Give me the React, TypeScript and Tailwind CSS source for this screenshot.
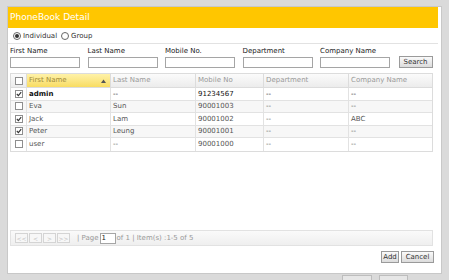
import React from "react";

type Row = {
  checked: boolean;
  first: string;
  last: string;
  mobile: string;
  dept: string;
  company: string;
  active?: boolean;
};

const rows: Row[] = [
  { checked: true, first: "admin", last: "--", mobile: "91234567", dept: "--", company: "--", active: true },
  { checked: false, first: "Eva", last: "Sun", mobile: "90001003", dept: "--", company: "--" },
  { checked: true, first: "Jack", last: "Lam", mobile: "90001002", dept: "--", company: "ABC" },
  { checked: true, first: "Peter", last: "Leung", mobile: "90001001", dept: "--", company: "--" },
  { checked: false, first: "user", last: "--", mobile: "90001000", dept: "--", company: "--" },
];

const fields = ["First Name", "Last Name", "Mobile No.", "Department", "Company Name"];

function Check({ on }: { on: boolean }) {
  return (
    <div className="w-[8px] h-[8px] border border-[#8e8e8e] bg-white flex items-center justify-center">
      {on && (
        <svg width="6" height="6" viewBox="0 0 6 6">
          <path d="M0.8 3 L2.4 4.6 L5.2 1.2" stroke="#333" strokeWidth="1.1" fill="none" />
        </svg>
      )}
    </div>
  );
}

function Radio({ on }: { on: boolean }) {
  return (
    <div className="w-[8px] h-[8px] rounded-full border border-[#666] bg-white flex items-center justify-center">
      {on && <div className="w-[4px] h-[4px] rounded-full bg-[#333]" />}
    </div>
  );
}

function Btn({ children, w }: { children: React.ReactNode; w: string }) {
  return (
    <div
      className={`${w} h-[12px] border border-[#9a9a9a] bg-gradient-to-b from-[#fafafa] to-[#dcdcdc] flex items-center justify-center text-[#333] text-[7px]`}
    >
      {children}
    </div>
  );
}

export default function App() {
  const cols = "grid grid-cols-[15px_84px_85px_68px_85px_85px]";
  return (
    <div
      className="relative w-[449px] h-[280px] bg-[#dadada] overflow-hidden"
      style={{ fontFamily: '"DejaVu Sans", Verdana, sans-serif' }}
    >
      <div className="absolute left-[7px] top-[6px] w-[435px] h-[268px] bg-white border border-[#c8c8c8] flex flex-col">
        {/* title */}
        <div className="w-[430px] h-[21px] bg-[#ffc600] flex items-center pl-[2px]">
          <span className="text-white text-[9px]">PhoneBook Detail</span>
        </div>

        {/* radio row */}
        <div className="w-[430px] h-[16px] border-b border-[#e2e2e2] flex items-center gap-[4px] pl-[5px] pt-[1px] text-[7px] text-[#333]">
          <div className="flex items-center gap-[2px]">
            <Radio on />
            <span>Individual</span>
          </div>
          <div className="flex items-center gap-[2px]">
            <Radio on={false} />
            <span>Group</span>
          </div>
        </div>

        {/* filter form */}
        <div className="flex items-end pl-[2px] pt-[2px] text-[7px] text-[#222]">
          {fields.map((f) => (
            <div key={f} className="flex flex-col mr-[7.5px]">
              <span className="leading-[10px]">{f}</span>
              <div className="w-[70px] h-[11px] mt-[1px] border border-[#a5a5a5] bg-white" />
            </div>
          ))}
          <div className="ml-[1px]">
            <Btn w="w-[34px]">Search</Btn>
          </div>
        </div>

        {/* grid */}
        <div className="ml-[2px] mt-[5px] w-[423px] border border-[#dcdcdc] text-[7px]">
          <div className={`${cols} h-[14px] bg-gradient-to-b from-[#fbfbfb] to-[#ececec] border-b border-[#dcdcdc] text-[#999]`}>
            <div className="flex items-center justify-center">
              <Check on={false} />
            </div>
            <div className="flex items-center justify-between px-[2px] bg-gradient-to-b from-[#fff2a8] to-[#f8dc60] border-l border-[#dcdcdc] text-[#a28b3a]">
              <span>First Name</span>
              <svg width="5" height="4" viewBox="0 0 5 4" className="mr-[2px]">
                <path d="M0 4 L2.5 0.5 L5 4 Z" fill="#555" />
              </svg>
            </div>
            <div className="flex items-center px-[2px] border-l border-[#dcdcdc]">Last Name</div>
            <div className="flex items-center px-[2px] border-l border-[#dcdcdc]">Mobile No</div>
            <div className="flex items-center px-[2px] border-l border-[#dcdcdc]">Department</div>
            <div className="flex items-center px-[2px] border-l border-[#dcdcdc]">Company Name</div>
          </div>
          {rows.map((r, i) => (
            <div
              key={r.first}
              className={`${cols} h-[12.5px] border-b border-[#e2e2e2] last:border-b-0 ${
                i % 2 === 1 ? "bg-[#f7f7f7]" : "bg-white"
              } ${r.active ? "text-[#111]" : "text-[#555]"}`}
            >
              <div className="flex items-center justify-center">
                <Check on={r.checked} />
              </div>
              <div className={`flex items-center px-[2px] border-l border-[#e2e2e2] ${r.active ? "font-semibold" : ""}`}>
                {r.first}
              </div>
              <div className="flex items-center px-[2px] border-l border-[#e2e2e2]">{r.last}</div>
              <div className="flex items-center px-[2px] border-l border-[#e2e2e2]">{r.mobile}</div>
              <div className="flex items-center px-[2px] border-l border-[#e2e2e2]">{r.dept}</div>
              <div className="flex items-center px-[2px] border-l border-[#e2e2e2]">{r.company}</div>
            </div>
          ))}
        </div>

        <div className="flex-1" />

        {/* pager */}
        <div className="ml-[2px] w-[423px] h-[16px] border border-[#e2e2e2] bg-gradient-to-b from-[#fafafa] to-[#efefef] flex items-center pl-[4px] gap-[1px] text-[7px] text-[#aaa]">
          {["<<", "<", ">", ">>"].map((s) => (
            <div
              key={s}
              className="w-[13px] h-[10px] border border-[#d4d4d4] bg-[#f7f7f7] flex items-center justify-center text-[#c0c0c0] text-[6px]"
            >
              {s}
            </div>
          ))}
          <span className="ml-[6px] text-[#999]">| Page</span>
          <div className="w-[16px] h-[11px] border border-[#a5a5a5] bg-white text-[#222] pl-[1px] flex items-center">1</div>
          <span className="text-[#999]">of 1 | Item(s) :1-5 of 5</span>
        </div>

        {/* actions */}
        <div className="flex justify-end gap-[2px] pr-[7px] mt-[5px] mb-[10px]">
          <Btn w="w-[18px]">Add</Btn>
          <Btn w="w-[33px]">Cancel</Btn>
        </div>
      </div>

      {/* faint buttons of the page behind */}
      <div className="absolute left-[342px] top-[275px] flex gap-[7px]">
        <div className="w-[30px] h-[8px] border border-[#bdbdbd] bg-[#e6e6e6]" />
        <div className="w-[29px] h-[8px] border border-[#bdbdbd] bg-[#e6e6e6]" />
      </div>
    </div>
  );
}
